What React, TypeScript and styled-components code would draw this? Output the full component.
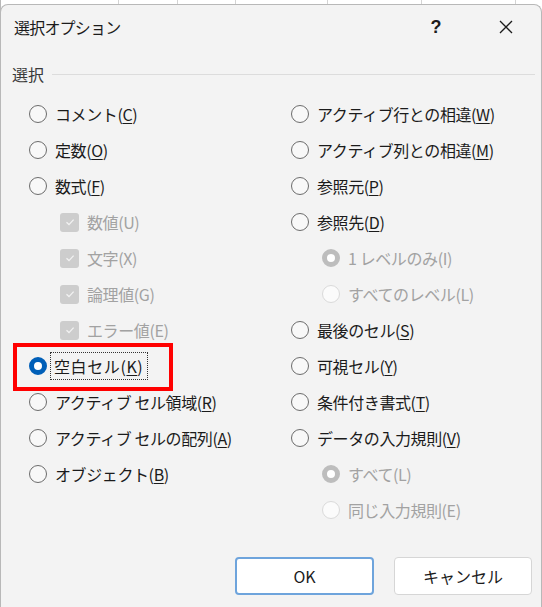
import React from "react";
import styled, { createGlobalStyle, css } from "styled-components";

const FONT = `"Noto Sans CJK JP", "Noto Sans", sans-serif`;

const GlobalStyle = createGlobalStyle`
  html, body {
    margin: 0;
    padding: 0;
  }
  body {
    width: 542px;
    height: 607px;
    overflow: hidden;
    font-family: ${FONT};
    /* the sheet behind the dialog */
    background-color: #ffffff;
    background-image:
      linear-gradient(#b9b9b9, #b9b9b9),
      linear-gradient(#d4d4d4, #d4d4d4),
      linear-gradient(#d4d4d4, #d4d4d4),
      linear-gradient(#d4d4d4, #d4d4d4),
      linear-gradient(#d4d4d4, #d4d4d4),
      linear-gradient(#d4d4d4, #d4d4d4),
      linear-gradient(#d4d4d4, #d4d4d4);
    background-size: 1px 14px;
    background-repeat: no-repeat;
    background-position: 0 0, 118px 0, 177px 0, 235px 0, 327px 0, 421px 0, 515px 0;
  }
`;

const Dialog = styled.div`
  box-sizing: border-box;
  margin-top: 4px;
  width: 542px;
  height: 603px;
  display: flex;
  flex-direction: column;
  background: #f3f3f3;
  border: 1px solid #b8b8b8;
  border-bottom: none;
  border-radius: 8px 8px 0 0;
  color: #1b1b1b;
`;

const TitleBar = styled.div`
  height: 44px;
  display: flex;
  align-items: center;
  padding-left: 13px;
`;

const Title = styled.div`
  flex: 1;
  font-size: 16px;
  letter-spacing: -0.8px;
  color: #1b1b1b;
`;

const TitleButton = styled.div`
  width: 70px;
  height: 44px;
  display: flex;
  align-items: center;
  justify-content: center;
  font-family: "Liberation Sans", sans-serif;
  font-size: 18px;
  font-weight: bold;
  color: #1b1b1b;
`;

const Body = styled.div`
  flex: 1;
  display: flex;
  flex-direction: column;
  padding: 13px 6px 0 11px;
`;

const GroupHeader = styled.div`
  display: flex;
  align-items: center;
  gap: 8px;
  height: 24px;
  font-size: 16px;
  color: #3a3a3a;
`;

const GroupLine = styled.div`
  flex: 1;
  height: 1px;
  background: #dcdcdc;
`;

const Columns = styled.div`
  display: grid;
  grid-template-columns: 262px 262px;
  padding: 10px 0 0 17px;
`;

const Column = styled.div`
  display: flex;
  flex-direction: column;
`;

const Row = styled.div<{ $indent?: boolean; $highlight?: boolean }>`
  position: relative;
  height: 36px;
  display: flex;
  align-items: center;
  gap: 8px;
  padding-left: ${(p) => (p.$indent ? "31px" : "0")};
  ${(p) =>
    p.$highlight &&
    css`
      &::after {
        content: "";
        position: absolute;
        left: -16px;
        top: -5px;
        width: 152px;
        height: 40px;
        border: 4px solid #ff0000;
      }
    `}
`;

const Radio = styled.span<{ $checked?: boolean; $disabled?: boolean }>`
  box-sizing: border-box;
  flex: none;
  width: 18px;
  height: 18px;
  border-radius: 50%;
  border: 1px solid #6c6c6c;
  background: #f8f8f8;
  ${(p) =>
    p.$disabled &&
    css`
      border-color: #dadada;
      background: #fbfbfb;
    `}
  ${(p) =>
    p.$checked &&
    css`
      border: 5px solid ${p.$disabled ? "#bdbdbd" : "#005fb8"};
      background: #ffffff;
    `}
`;

const CheckBox = styled.span`
  box-sizing: border-box;
  flex: none;
  width: 19px;
  height: 19px;
  border-radius: 3px;
  background: #cdcdcd;
  display: flex;
  align-items: center;
  justify-content: center;
`;

const Label = styled.span<{ $disabled?: boolean; $focused?: boolean }>`
  font-size: 16px;
  letter-spacing: -0.4px;
  white-space: nowrap;
  color: ${(p) => (p.$disabled ? "#a2a2a2" : "#1b1b1b")};
  ${(p) =>
    p.$focused &&
    css`
      letter-spacing: 0.6px;
      outline: 1px dotted #333;
      outline-offset: 1px;
      padding: 0 3px 0 2px;
      margin-left: -3px;
    `}
`;

const Key = styled.span`
  text-decoration: underline;
  text-underline-offset: 2px;
`;

const Footer = styled.div`
  margin-top: auto;
  display: flex;
  justify-content: flex-end;
  gap: 20px;
  padding: 0 9px 12px 0;
`;

const Button = styled.div<{ $primary?: boolean }>`
  box-sizing: border-box;
  width: ${(p) => (p.$primary ? "139px" : "138px")};
  height: 38px;
  display: flex;
  align-items: center;
  justify-content: center;
  background: #ffffff;
  border-radius: 4px;
  border: ${(p) => (p.$primary ? "2px solid #6ea4dc" : "1px solid #d6d6d6")};
  font-size: 16px;
  color: #1b1b1b;
`;

type Option = {
  label: string;
  key?: string;
  kind: "radio" | "check";
  checked?: boolean;
  disabled?: boolean;
  indent?: boolean;
  highlight?: boolean;
};

const left: Option[] = [
  { label: "コメント", key: "C", kind: "radio" },
  { label: "定数", key: "O", kind: "radio" },
  { label: "数式", key: "F", kind: "radio" },
  { label: "数値(U)", kind: "check", checked: true, disabled: true, indent: true },
  { label: "文字(X)", kind: "check", checked: true, disabled: true, indent: true },
  { label: "論理値(G)", kind: "check", checked: true, disabled: true, indent: true },
  { label: "エラー値(E)", kind: "check", checked: true, disabled: true, indent: true },
  { label: "空白セル", key: "K", kind: "radio", checked: true, highlight: true },
  { label: "アクティブ セル領域", key: "R", kind: "radio" },
  { label: "アクティブ セルの配列", key: "A", kind: "radio" },
  { label: "オブジェクト", key: "B", kind: "radio" },
];

const right: Option[] = [
  { label: "アクティブ行との相違", key: "W", kind: "radio" },
  { label: "アクティブ列との相違", key: "M", kind: "radio" },
  { label: "参照元", key: "P", kind: "radio" },
  { label: "参照先", key: "D", kind: "radio" },
  { label: "1 レベルのみ(I)", kind: "radio", checked: true, disabled: true, indent: true },
  { label: "すべてのレベル(L)", kind: "radio", disabled: true, indent: true },
  { label: "最後のセル", key: "S", kind: "radio" },
  { label: "可視セル", key: "Y", kind: "radio" },
  { label: "条件付き書式", key: "T", kind: "radio" },
  { label: "データの入力規則", key: "V", kind: "radio" },
  { label: "すべて(L)", kind: "radio", checked: true, disabled: true, indent: true },
  { label: "同じ入力規則(E)", kind: "radio", disabled: true, indent: true },
];

const Check = () => (
  <svg width="12" height="12" viewBox="0 0 12 12">
    <path d="M2.5 6.3 L5 8.6 L9.6 3.6" fill="none" stroke="#f2f2f2" strokeWidth="1.3" />
  </svg>
);

const OptionRow = ({ o }: { o: Option }) => (
  <Row $indent={o.indent} $highlight={o.highlight}>
    {o.kind === "radio" ? (
      <Radio $checked={o.checked} $disabled={o.disabled} />
    ) : (
      <CheckBox>{o.checked && <Check />}</CheckBox>
    )}
    <Label $disabled={o.disabled} $focused={o.highlight}>
      {o.label}
      {o.key && (
        <>
          (<Key>{o.key}</Key>)
        </>
      )}
    </Label>
  </Row>
);

const CloseIcon = () => (
  <svg width="16" height="16" viewBox="0 0 16 16">
    <path d="M2 2 L14 14 M14 2 L2 14" stroke="#1b1b1b" strokeWidth="1.3" />
  </svg>
);

export default function App() {
  return (
    <>
      <GlobalStyle />
      <Dialog>
        <TitleBar>
          <Title>選択オプション</Title>
          <TitleButton>?</TitleButton>
          <TitleButton>
            <CloseIcon />
          </TitleButton>
        </TitleBar>
        <Body>
          <GroupHeader>
            選択
            <GroupLine />
          </GroupHeader>
          <Columns>
            <Column>
              {left.map((o) => (
                <OptionRow key={o.label} o={o} />
              ))}
            </Column>
            <Column>
              {right.map((o) => (
                <OptionRow key={o.label} o={o} />
              ))}
            </Column>
          </Columns>
        </Body>
        <Footer>
          <Button $primary>OK</Button>
          <Button>キャンセル</Button>
        </Footer>
      </Dialog>
    </>
  );
}
